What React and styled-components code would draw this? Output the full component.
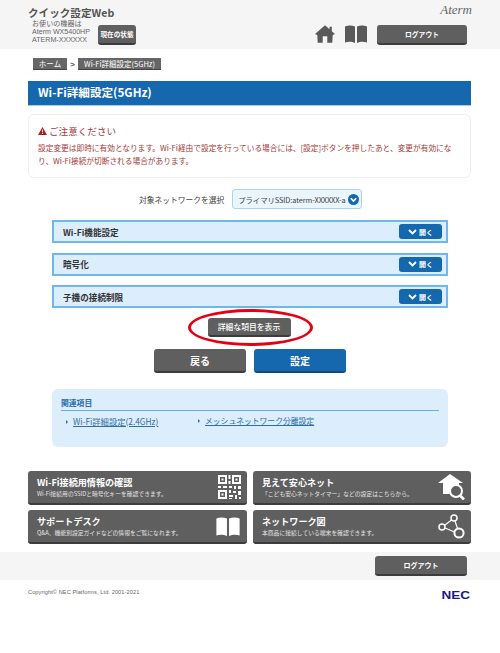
import React from 'react'
import styled, { createGlobalStyle } from 'styled-components'

const GlobalStyle = createGlobalStyle`
  html, body { margin: 0; padding: 0; background: #fff; }
  body { font-family: "Noto Sans CJK JP", "Liberation Sans", sans-serif; color: #444; }
  * { box-sizing: border-box; }
`

const Page = styled.div`
  width: 500px;
  height: 653px;
  overflow: hidden;
`

const Header = styled.header`
  height: 49px;
  background: #f5f5f5;
  padding: 6px 33px 0 28px;
  display: flex;
  justify-content: space-between;
`
const HeaderLeft = styled.div`
  display: flex;
  flex-direction: column;
`
const SiteTitle = styled.div`
  font-size: 10.6px;
  line-height: 14px;
  font-weight: 700;
  color: #555;
  height: 14px;
`
const DeviceRow = styled.div`
  display: flex;
  align-items: flex-start;
  padding-left: 4px;
  gap: 7px;
`
const DeviceInfo = styled.div`
  font-family: "Liberation Sans", "Noto Sans CJK JP", sans-serif;
  font-size: 7.1px;
  line-height: 8px;
  color: #666;
  width: 59px;
  white-space: nowrap;
`
const StatusSlot = styled.div`
  margin-top: 5px;
`
const HeaderRight = styled.div`
  display: flex;
  flex-direction: column;
  align-items: flex-end;
`
const AtermLogo = styled.div`
  font-family: "Liberation Serif", serif;
  font-style: italic;
  font-size: 13px;
  line-height: 12px;
  color: #666;
  height: 21px;
  margin: -2px -5px 0 0;
`
const HeaderTools = styled.div`
  display: flex;
  align-items: flex-start;
  gap: 9px;
`

const GreyButton = styled.div`
  display: flex;
  align-items: center;
  justify-content: center;
  width: ${p => p.$w}px;
  height: ${p => p.$h}px;
  background: #5f5f5f;
  border-bottom: 2px solid #3c3c3c;
  border-radius: 3px;
  color: #fff;
  font-size: ${p => p.$size || 7}px;
  font-weight: ${p => p.$weight || 700};
  white-space: nowrap;
`

const Main = styled.main`
  padding: 9px 29px 0 28px;
`
const Crumbs = styled.nav`
  display: flex;
  align-items: center;
  height: 12px;
  padding-left: 5px;
  font-size: 8px;
  color: #555;
`
const Crumb = styled.span`
  display: flex;
  align-items: center;
  justify-content: center;
  height: 12px;
  width: ${p => p.$w}px;
  background: #666;
  border-bottom: 1px solid #444;
  color: #fff;
  font-size: 7.5px;
  white-space: nowrap;
`
const CrumbSep = styled.span`
  width: 11px;
  text-align: center;
  font-weight: 700;
  font-family: "Liberation Sans", sans-serif;
`

const TitleBar = styled.h1`
  margin: 11px 0 0;
  height: 24px;
  background: #1568ae;
  box-shadow: 0 1px 0 #a8cdea;
  color: #fff;
  font-size: 11.6px;
  font-weight: 700;
  line-height: 23px;
  padding-left: 10px;
`

const Notice = styled.section`
  margin-top: 9px;
  height: 64px;
  border: 1px solid #eeeeee;
  border-radius: 6px;
  padding: 8px 9px;
  color: #a23b3b;
`
const NoticeHead = styled.div`
  display: flex;
  align-items: center;
  gap: 2px;
  font-size: 9.6px;
  line-height: 16px;
  margin-bottom: 3px;
`
const NoticeBody = styled.p`
  margin: 0;
  font-size: 7.7px;
  line-height: 12.5px;
  width: 425px;
`

const SelectRow = styled.div`
  margin-top: 11px;
  margin-left: 111px;
  display: flex;
  align-items: center;
  gap: 8px;
  font-size: 7.75px;
  color: #444;
  white-space: nowrap;
`
const SelectBox = styled.div`
  width: 130px;
  height: 20px;
  display: flex;
  align-items: center;
  justify-content: space-between;
  padding: 0 2px 0 5px;
  background: #eaf5fd;
  border: 1px solid #a6d4f2;
  border-radius: 3px;
  font-size: 7.4px;
  white-space: nowrap;
`
const SelectText = styled.span`
  letter-spacing: -0.1px;
`

const Panels = styled.div`
  margin: 11px 0 0 24px;
  width: 396px;
  display: flex;
  flex-direction: column;
  gap: 9.5px;
`
const Panel = styled.div`
  height: 23px;
  display: flex;
  align-items: center;
  justify-content: space-between;
  background: #dceefc;
  border: 2px solid #6db9ec;
  padding: 0 4px 0 9px;
`
const PanelName = styled.span`
  font-size: 8.6px;
  font-weight: 700;
  color: #333;
`
const OpenButton = styled.span`
  width: 43px;
  height: 15px;
  display: flex;
  align-items: center;
  justify-content: center;
  gap: 2px;
  background: #1568ae;
  border-radius: 3px;
  color: #fff;
  font-size: 7px;
  font-weight: 700;
`

const DetailWrap = styled.div`
  position: relative;
  margin-top: 10px;
  display: flex;
  justify-content: center;
  padding-right: 1px;
`
const RedRing = styled.div`
  position: absolute;
  left: 160px;
  top: -9px;
  width: 125px;
  height: 37px;
  border: 3px solid #e60012;
  border-radius: 50%;
`
const ActionRow = styled.div`
  margin-top: 12px;
  display: flex;
  justify-content: center;
  gap: 8px;
  padding-left: 1px;
`
const BlueButton = styled(GreyButton)`
  background: #1568ae;
  border-bottom-color: #0d4a80;
`

const Related = styled.section`
  margin: 16px 0 0 24px;
  width: 396px;
  height: 58px;
  background: #dceefc;
  border-radius: 6px;
  padding: 8px 9px 0;
`
const RelatedHead = styled.div`
  height: 14px;
  border-bottom: 1px solid #5fb3e8;
  font-size: 7.8px;
  line-height: 12px;
  font-weight: 700;
  color: #2a6da8;
`
const RelatedLinks = styled.div`
  display: grid;
  grid-template-columns: 132px 1fr;
  padding: 4px 0 0 5px;
  line-height: 12px;
`
const RelatedLink = styled.a`
  color: #2f6da6;
  text-decoration: underline;
  font-size: ${p => p.$size}px;
  &::before {
    content: "";
    display: inline-block;
    width: 0;
    height: 0;
    margin: 0 5px 1px 0;
    border-left: 2px solid #2f6da6;
    border-top: 2px solid transparent;
    border-bottom: 2px solid transparent;
  }
`

const Tiles = styled.div`
  margin-top: 24px;
  display: grid;
  grid-template-columns: 219px 218px;
  grid-auto-rows: 34px;
  column-gap: 6px;
  row-gap: 5px;
`
const Tile = styled.div`
  position: relative;
  background: #5f5f5f;
  border-bottom: 2px solid #3c3c3c;
  border-radius: 3px;
  display: flex;
  justify-content: space-between;
  align-items: center;
  padding: 0 6px 0 9px;
  color: #fff;
`
const TileText = styled.div`
  display: flex;
  flex-direction: column;
  margin-top: -1px;
`
const TileTitle = styled.div`
  font-size: 9.1px;
  line-height: 13px;
  font-weight: 700;
`
const TileSub = styled.div`
  font-size: 5.8px;
  line-height: 9px;
  color: #e4e4e4;
  white-space: nowrap;
`

const FootBar = styled.div`
  margin-top: 8px;
  height: 28px;
  background: #f5f5f5;
  padding: 4px 33px 0 0;
  display: flex;
  justify-content: flex-end;
`
const Copy = styled.footer`
  padding: 8px 30px 0 28px;
  display: flex;
  justify-content: space-between;
  align-items: flex-start;
`
const CopyText = styled.div`
  font-family: "Liberation Sans", sans-serif;
  font-size: 5.6px;
  line-height: 8px;
  letter-spacing: 0.1px;
  color: #666;
`
const NecLogo = styled.div`
  font-family: "Liberation Sans", sans-serif;
  font-weight: 700;
  font-size: 10px;
  line-height: 10px;
  margin-top: 3px;
  color: #1a1a8f;
  transform: scaleX(1.35);
  transform-origin: right center;
`

const HomeIcon = ({ color = '#595959' }) => (
  <svg width="20" height="18" viewBox="0 0 22 19">
    <path fill={color} d="M11 0 L16 4.3 L16 1.5 L18.5 1.5 L18.5 6.5 L22 9.5 L19.5 10.5 L19 19 L13.5 19 L13.5 12 L8.5 12 L8.5 19 L3 19 L2.5 10.5 L0 9.5 Z" />
  </svg>
)

const BookIcon = ({ width = 24, height = 18, color = '#595959' }) => (
  <svg width={width} height={height} viewBox="0 0 24 18">
    <path fill={color} d="M1 1.5 C4 0 8 0 11 1.5 L11 18 C8 16.5 4 16.5 1 17.5 Z M13 1.5 C16 0 20 0 23 1.5 L23 17.5 C20 16.5 16 16.5 13 18 Z" />
  </svg>
)

const Chevron = () => (
  <svg width="9" height="6" viewBox="0 0 9 6">
    <path d="M1 1 L4.5 4.5 L8 1" fill="none" stroke="#fff" strokeWidth="1.8" />
  </svg>
)

const QrIcon = () => (
  <svg width="23" height="24" viewBox="0 0 23 24" fill="#fff">
    <path fillRule="evenodd" d="M0 0h9v9H0z M2 2v5h5V2z M14 0h9v9h-9z M16 2v5h5V2z M0 15h9v9H0z M2 17v5h5v-5z" />
    <path d="M3.5 3.5h2v2h-2z M17.5 3.5h2v2h-2z M3.5 18.5h2v2h-2z M10.5 0h2v4h-2z M10.5 6h2v3h-2z M0 11h3v2H0z M5 11h4v2H5z M11 11h3v2h-3z M16 11h2v3h-2z M20 11h3v3h-3z M11 15h2v3h-2z M15 16h3v2h-3z M20 16h3v4h-3z M11 20h4v2h-4z M17 20h2v4h-2z M11 23h3v1h-3z M21 22h2v2h-2z" />
  </svg>
)

const HomeSearchIcon = () => (
  <svg width="27" height="26" viewBox="0 0 27 26">
    <path fill="#fff" d="M12 0 L25 9 L21 9 L21 11 C16 11 12 14 11.5 20 L5 20 L5 9 L0 9 Z" />
    <circle cx="18" cy="17" r="6" fill="#5f5f5f" stroke="#fff" strokeWidth="2" />
    <path d="M22 21.5 L26 25.5" stroke="#fff" strokeWidth="2.6" />
  </svg>
)

const NetworkIcon = () => (
  <svg width="27" height="25" viewBox="0 0 27 25" fill="none" stroke="#fff">
    <circle cx="4" cy="13" r="3" strokeWidth="1.5" />
    <circle cx="16" cy="4" r="3" strokeWidth="1.5" />
    <circle cx="21" cy="19" r="4.6" strokeWidth="2" />
    <path d="M7 11 L13.5 6 M7 14 L16.5 18 M17 7 L19.5 14.5" strokeWidth="1.2" />
  </svg>
)

const panels = ['Wi-Fi機能設定', '暗号化', '子機の接続制限']

const tiles = [
  { title: 'Wi-Fi接続用情報の確認', sub: 'Wi-Fi接続用のSSIDと暗号化キーを確認できます。', icon: <QrIcon /> },
  { title: '見えて安心ネット', sub: '「こども安心ネットタイマー」などの設定はこちらから。', icon: <HomeSearchIcon /> },
  { title: 'サポートデスク', sub: 'Q&A、機能別設定ガイドなどの情報をご覧になれます。', icon: <BookIcon width={26} height={19} color="#fff" /> },
  { title: 'ネットワーク図', sub: '本商品に接続している端末を確認できます。', icon: <NetworkIcon /> },
]

export default function App() {
  return (
    <Page>
      <GlobalStyle />
      <Header>
        <HeaderLeft>
          <SiteTitle>クイック設定Web</SiteTitle>
          <DeviceRow>
            <DeviceInfo>
              お使いの機器は<br />
              Aterm WX5400HP<br />
              ATERM-XXXXXX
            </DeviceInfo>
            <StatusSlot>
              <GreyButton $w={38} $h={20} $size={6.6}>現在の状態</GreyButton>
            </StatusSlot>
          </DeviceRow>
        </HeaderLeft>
        <HeaderRight>
          <AtermLogo>Aterm</AtermLogo>
          <HeaderTools>
            <HomeIcon />
            <BookIcon />
            <GreyButton $w={90} $h={20} $size={6.8}>ログアウト</GreyButton>
          </HeaderTools>
        </HeaderRight>
      </Header>

      <Main>
        <Crumbs>
          <Crumb $w={34}>ホーム</Crumb>
          <CrumbSep>&gt;</CrumbSep>
          <Crumb $w={83}>Wi-Fi詳細設定(5GHz)</Crumb>
        </Crumbs>

        <TitleBar>Wi-Fi詳細設定(5GHz)</TitleBar>

        <Notice>
          <NoticeHead>
            <svg width="9" height="8" viewBox="0 0 9 8">
              <path fill="#b01e23" d="M4.5 0 L9 8 L0 8 Z" />
              <path fill="#fff" d="M4.1 2.5h.8v3h-.8z M4.1 6h.8v1h-.8z" />
            </svg>
            ご注意ください
          </NoticeHead>
          <NoticeBody>
            設定変更は即時に有効となります。Wi-Fi経由で設定を行っている場合には、[設定]ボタンを押したあと、変更が有効になり、Wi-Fi接続が切断される場合があります。
          </NoticeBody>
        </Notice>

        <SelectRow>
          対象ネットワークを選択
          <SelectBox>
            <SelectText>プライマリSSID:aterm-XXXXXX-a</SelectText>
            <svg width="11" height="11" viewBox="0 0 11 11">
              <circle cx="5.5" cy="5.5" r="5.5" fill="#1568ae" />
              <path d="M2.8 4.2 L5.5 7 L8.2 4.2" fill="none" stroke="#fff" strokeWidth="1.6" />
            </svg>
          </SelectBox>
        </SelectRow>

        <Panels>
          {panels.map(name => (
            <Panel key={name}>
              <PanelName>{name}</PanelName>
              <OpenButton><Chevron />開く</OpenButton>
            </Panel>
          ))}
        </Panels>

        <DetailWrap>
          <GreyButton $w={83} $h={19} $size={7.8} $weight={500}>詳細な項目を表示</GreyButton>
          <RedRing />
        </DetailWrap>

        <ActionRow>
          <GreyButton $w={92} $h={24} $size={10}>戻る</GreyButton>
          <BlueButton $w={92} $h={24} $size={10}>設定</BlueButton>
        </ActionRow>

        <Related>
          <RelatedHead>関連項目</RelatedHead>
          <RelatedLinks>
            <RelatedLink $size={8.3}>Wi-Fi詳細設定(2.4GHz)</RelatedLink>
            <RelatedLink $size={7.8}>メッシュネットワーク分離設定</RelatedLink>
          </RelatedLinks>
        </Related>

        <Tiles>
          {tiles.map(t => (
            <Tile key={t.title}>
              <TileText>
                <TileTitle>{t.title}</TileTitle>
                <TileSub>{t.sub}</TileSub>
              </TileText>
              {t.icon}
            </Tile>
          ))}
        </Tiles>
      </Main>

      <FootBar>
        <GreyButton $w={92} $h={20} $size={7}>ログアウト</GreyButton>
      </FootBar>
      <Copy>
        <CopyText>Copyright© NEC Platforms, Ltd. 2001-2021</CopyText>
        <NecLogo>NEC</NecLogo>
      </Copy>
    </Page>
  )
}
